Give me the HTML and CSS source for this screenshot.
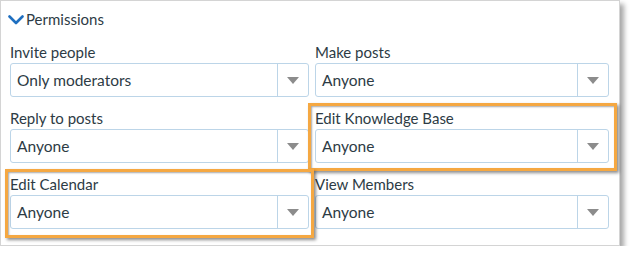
FILE: index.html
```html
<!DOCTYPE html>
<html lang="en">
<head>
  <meta charset="UTF-8">
  <title>Permissions</title>
  <link rel="stylesheet" href="styles.css">
</head>
<body>
  <div class="card">
    <div class="section-title">
      <svg class="chevron" width="16" height="10" viewBox="0 0 16 10">
        <path d="M1.5 1.5 L8 8 L14.5 1.5" fill="none" stroke="#1f6fc0" stroke-width="2.6" stroke-linecap="round" stroke-linejoin="round"/>
      </svg>
      Permissions
    </div>

    <div class="grid">
      <div class="field">
        <label>Invite people</label>
        <div class="select"><span class="value">Only moderators</span><span class="arrow"></span></div>
      </div>
      <div class="field">
        <label>Make posts</label>
        <div class="select"><span class="value">Anyone</span><span class="arrow"></span></div>
      </div>
      <div class="field">
        <label>Reply to posts</label>
        <div class="select"><span class="value">Anyone</span><span class="arrow"></span></div>
      </div>
      <div class="field">
        <label>Edit Knowledge Base</label>
        <div class="select"><span class="value">Anyone</span><span class="arrow"></span></div>
      </div>
      <div class="field">
        <label>Edit Calendar</label>
        <div class="select"><span class="value">Anyone</span><span class="arrow"></span></div>
      </div>
      <div class="field">
        <label>View Members</label>
        <div class="select"><span class="value">Anyone</span><span class="arrow"></span></div>
      </div>
    </div>

    <!-- callout highlights -->
    <div class="highlight hl-kb"></div>
    <div class="highlight hl-cal"></div>
  </div>
</body>
</html>
```

FILE: styles.css
```css
body {
  margin: 0;
  background: #fff;
  font-family: Lato, "Open Sans", sans-serif;
  color: #2d3b45;
}
.card {
  position: relative;
  width: 609px;
  height: 236px;
  border: 1px solid #d4d4d4;
  background: #fff;
  box-shadow: 4px 4px 5px rgba(0, 0, 0, 0.35);
  padding: 8px 0 0 9px;
}
.section-title {
  display: flex;
  align-items: center;
  gap: 2px;
  font-size: 15px;
  line-height: 20px;
  margin-left: -2px;
  margin-bottom: 13px;
}
.chevron {
  display: block;
  margin-top: 1px;
}
.grid {
  display: grid;
  grid-template-columns: 299px 294px;
  column-gap: 6px;
  row-gap: 11px;
}
.field label {
  display: block;
  font-size: 15px;
  line-height: 20px;
  margin-bottom: 1px;
}
.select {
  display: flex;
  align-items: center;
  height: 34px;
  box-sizing: border-box;
  border: 1px solid #bcd5e8;
  border-radius: 3px;
  background: #fff;
}
.select .value {
  flex: 1;
  padding-left: 6px;
  font-size: 15.5px;
}
.select .arrow {
  width: 30px;
  height: 100%;
  border-left: 1px solid #bcd5e8;
  display: flex;
  align-items: center;
  justify-content: center;
}
.select .arrow::after {
  content: "";
  border-left: 6px solid transparent;
  border-right: 6px solid transparent;
  border-top: 7px solid #8c8c8c;
}
.highlight {
  position: absolute;
  border: 3px solid #f5a842;
  box-shadow: 2px 2px 3px rgba(0, 0, 0, 0.45), inset 1px 1px 2px rgba(0, 0, 0, 0.35);
  box-sizing: border-box;
}
.hl-kb {
  left: 307px;
  top: 102px;
  width: 309px;
  height: 68px;
}
.hl-cal {
  left: 4px;
  top: 168px;
  width: 309px;
  height: 69px;
}
```
